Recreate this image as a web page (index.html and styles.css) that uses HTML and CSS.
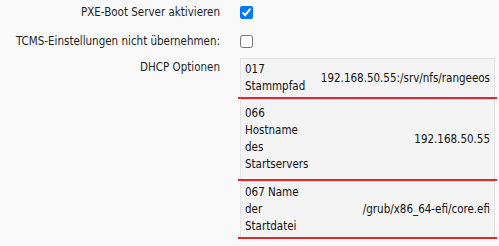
FILE: index.html
```html
<!DOCTYPE html>
<html lang="de">
<head>
<meta charset="utf-8">
<title>PXE</title>
<link rel="stylesheet" href="styles.css">
</head>
<body>
<div class="form">
  <div class="row">
    <label class="lbl" for="pxe">PXE-Boot Server aktivieren</label>
    <div class="ctl"><input type="checkbox" id="pxe" class="cb" checked></div>
  </div>
  <div class="row">
    <label class="lbl" for="tcms">TCMS-Einstellungen nicht übernehmen:</label>
    <div class="ctl"><input type="checkbox" id="tcms" class="cb"></div>
  </div>
  <div class="row row-top">
    <div class="lbl lbl-top">DHCP Optionen</div>
    <div class="opts">
      <div class="opt">
        <div class="opt-inner">
          <div class="opt-name">017 Stammpfad</div>
          <div class="opt-val">192.168.50.55:/srv/nfs/rangeeos</div>
        </div>
      </div>
      <div class="opt">
        <div class="opt-inner opt-inner-tall">
          <div class="opt-name">066 Hostname des Startservers</div>
          <div class="opt-val">192.168.50.55</div>
        </div>
      </div>
      <div class="opt">
        <div class="opt-inner">
          <div class="opt-name">067 Name der Startdatei</div>
          <div class="opt-val">/grub/x86_64-efi/core.efi</div>
        </div>
      </div>
    </div>
  </div>
</div>
</body>
</html>
```
FILE: styles.css
```css
html, body {
  margin: 0;
  padding: 0;
  background: #f9f9f9;
}
body {
  font-family: "DejaVu Sans Condensed", "DejaVu Sans", sans-serif;
  font-size: 11.5px;
  color: #1e1e1e;
}
.form {
  width: 499px;
}
.row {
  display: grid;
  grid-template-columns: 220px 1fr;
  column-gap: 20px;
  align-items: center;
  min-height: 25px;
  margin-bottom: 4px;
}
.row-top {
  align-items: start;
  margin-top: 1px;
  margin-bottom: 0;
}
.lbl {
  text-align: right;
  line-height: 17px;
  white-space: nowrap;
}
.lbl-top {
  padding-top: 1px;
}
.ctl {
  display: flex;
  align-items: center;
}
.cb {
  margin: 0;
  width: 13px;
  height: 13px;
}
.opts {
  width: 255px;
}
.opt {
  margin: 0 -2px;
  border-bottom: 2px solid #e3262a;
}
.opt-inner {
  margin: 0 2px;
  border: 1px solid #e4e4e4;
  border-bottom: 0;
  background: #f4f4f4;
  display: grid;
  grid-template-columns: 64px 1fr;
  align-items: center;
  padding: 2px 4px;
  line-height: 17px;
  color: #111;
}
.opt-inner-tall {
  padding: 5px 4px 6px;
}
.opt-name {
  align-self: start;
}
.opt-val {
  text-align: right;
  white-space: nowrap;
}
```
